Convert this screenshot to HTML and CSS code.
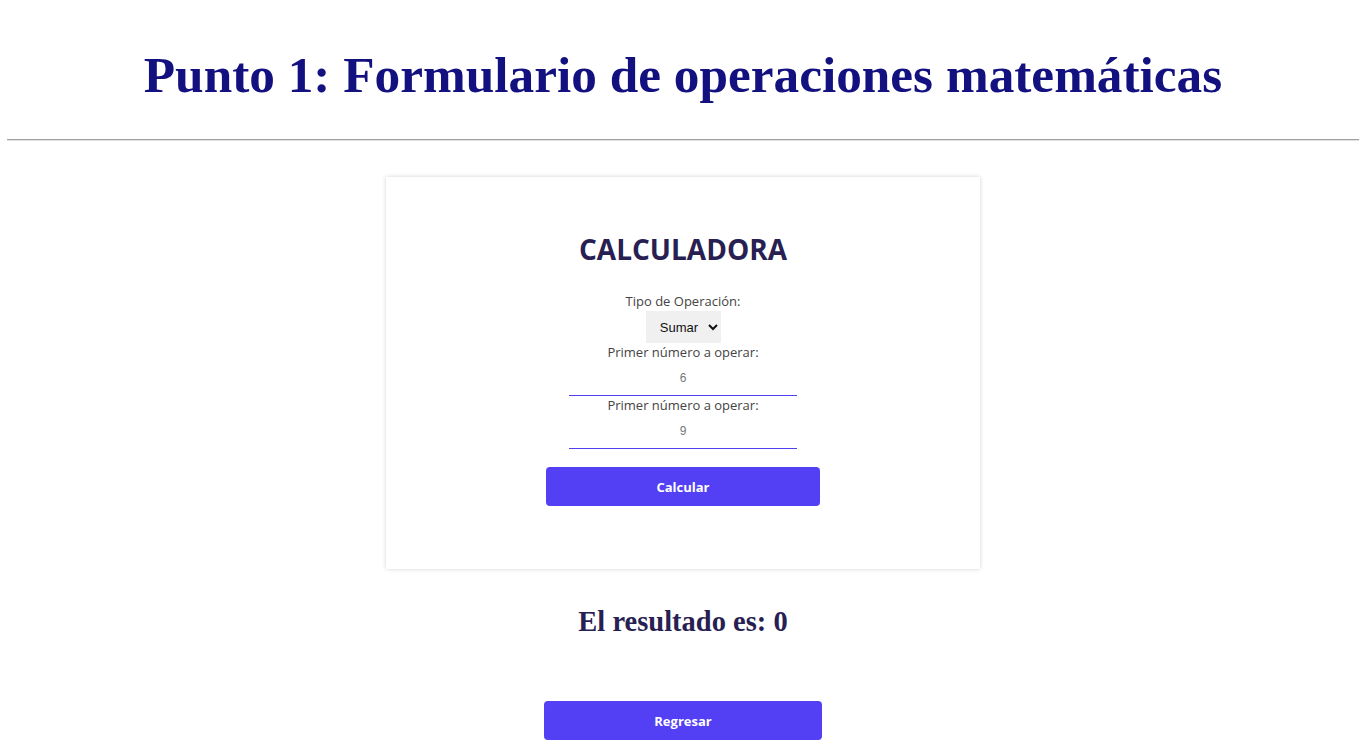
FILE: index.html
```html
<!DOCTYPE html>
<html lang="es">
<head>
<meta charset="utf-8">
<title>Punto 1</title>
<link rel="stylesheet" href="styles.css">
</head>
<body>
<h1 class="title">Punto 1: Formulario de operaciones matemáticas</h1>
<hr class="rule">
<main class="page">
  <section class="card">
    <h2 class="card-title">CALCULADORA</h2>
    <form class="form">
      <label class="label">Tipo de Operación:</label>
      <select class="select">
        <option>Sumar</option>
        <option>Restar</option>
      </select>
      <label class="label">Primer número a operar:</label>
      <input class="input" type="text" value="6">
      <label class="label">Primer número a operar:</label>
      <input class="input" type="text" value="9">
      <button type="button" class="btn btn-calc">Calcular</button>
    </form>
  </section>
  <h2 class="result">El resultado es: 0</h2>
  <button type="button" class="btn btn-back">Regresar</button>
</main>
</body>
</html>
```
FILE: styles.css
```css
* { box-sizing: border-box; }
body {
  margin: 0;
  padding: 0 7px;
  font-family: "Liberation Serif", "Times New Roman", serif;
  background: #fff;
}
.title {
  margin: 0;
  padding-top: 46px;
  height: 139px;
  text-align: center;
  font-size: 51.3px;
  line-height: 58px;
  font-weight: bold;
  color: #13117f;
}
.rule {
  margin: 0;
  border: none;
  border-top: 1px solid #a0a0a0;
  border-bottom: 1px solid #e0e0e0;
}
.page {
  display: flex;
  flex-direction: column;
  align-items: center;
  padding-top: 36px;
}
.card {
  width: 594px;
  height: 392px;
  background: #fff;
  box-shadow: 0 0 4px rgba(0,0,0,0.18);
  display: flex;
  flex-direction: column;
  align-items: center;
  padding-top: 55px;
}
.card-title {
  margin: 0 0 26px;
  font-family: "Open Sans", "Noto Sans", sans-serif;
  font-weight: 700;
  font-size: 28px;
  line-height: 34px;
  color: #281f52;
}
.form {
  display: flex;
  flex-direction: column;
  align-items: center;
}
.label {
  font-family: "Open Sans", "Noto Sans", sans-serif;
  font-size: 13px;
  line-height: 18px;
  color: #444;
}
.select {
  margin-top: 1px;
  width: 75px;
  height: 32px;
  border: none;
  background: #f0f0f0;
  font-family: "Liberation Sans", Arial, sans-serif;
  font-size: 13px;
  color: #111;
  padding: 0 4px 0 8px;
  text-align: center;
}
.input {
  width: 228px;
  height: 35px;
  margin: 0;
  border: none;
  border-bottom: 1px solid #5040f0;
  outline: none;
  text-align: center;
  font-family: "Liberation Sans", Arial, sans-serif;
  font-size: 12px;
  color: #777;
  padding: 0;
  background: transparent;
}
.btn {
  height: 39px;
  border: none;
  border-radius: 4px;
  background: #5340f5;
  color: #fff;
  font-family: "Open Sans", "Noto Sans", sans-serif;
  font-weight: 700;
  font-size: 13px;
}
.btn-calc {
  width: 274px;
  margin-top: 18px;
}
.result {
  margin: 37px 0 0;
  font-size: 28.5px;
  line-height: 32px;
  font-weight: bold;
  color: #281f52;
}
.btn-back {
  width: 278px;
  margin-top: 63px;
}
```
